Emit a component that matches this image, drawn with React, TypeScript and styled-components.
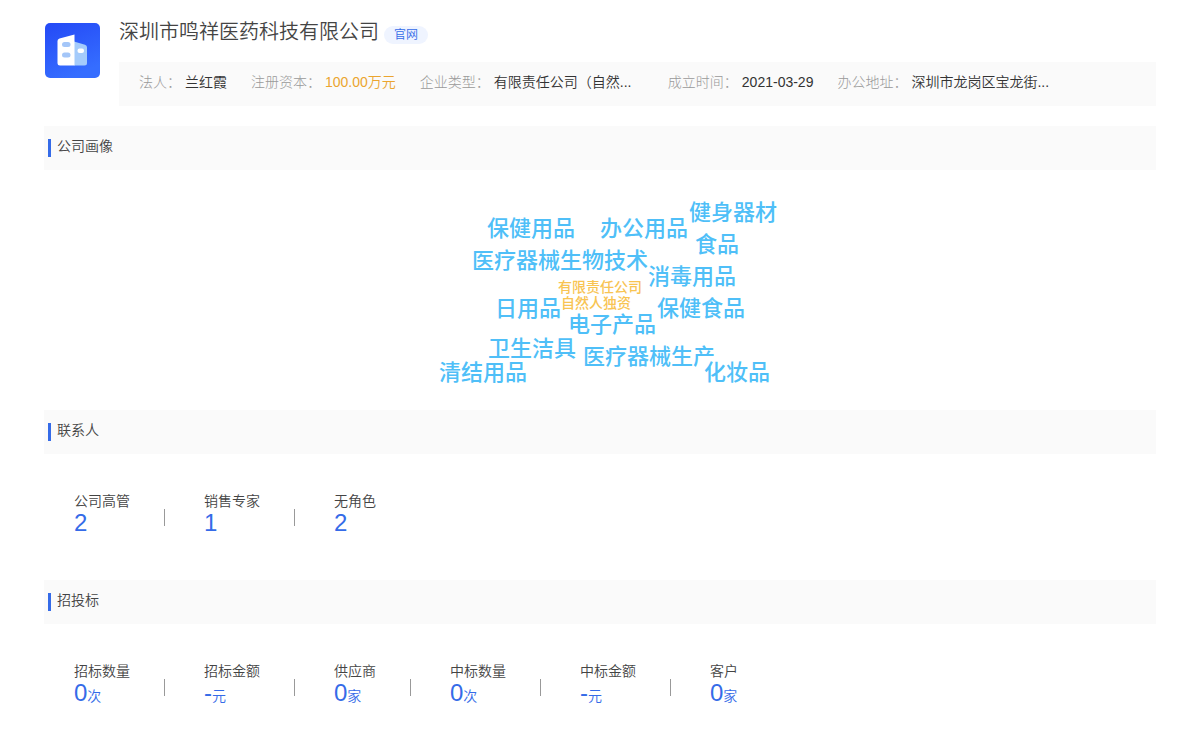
import React from "react";
import styled, { createGlobalStyle } from "styled-components";

const GlobalStyle = createGlobalStyle`
  * { box-sizing: border-box; }
  body {
    margin: 0;
    background: #fff;
    color: #444;
    font: 350 14px/20px "Liberation Sans", "Noto Sans CJK SC", sans-serif;
  }
  h1, h2, dl, dt, dd { margin: 0; font-weight: 350; }
`;

const Page = styled.main`
  padding: 20px 44px 0;
`;

const Header = styled.header`
  display: flex;
  gap: 18px;
  margin-bottom: 20px;
`;

const Logo = styled.svg`
  flex: none;
  width: 57px;
  height: 57px;
  margin-top: 2px;
`;

const HeaderBody = styled.div`
  flex: 1;
  min-width: 0;
`;

const TitleRow = styled.div`
  display: flex;
  align-items: center;
  gap: 5px;
  height: 24px;
  margin-bottom: 18px;
`;

const Title = styled.h1`
  font-size: 20px;
  line-height: 24px;
`;

const SiteLink = styled.a`
  align-self: flex-end;
  height: 18px;
  padding: 0 10px;
  border-radius: 9px;
  background: #eff4ff;
  color: #356be8;
  font-size: 12px;
  line-height: 18px;
  text-decoration: none;
`;

const Facts = styled.dl`
  display: flex;
  flex-wrap: wrap;
  column-gap: 24px;
  padding: 10px 20px 14px;
  background: #fafafa;
`;

const Fact = styled.div`
  display: flex;
  gap: 4px;
`;

const FactLabel = styled.dt`
  color: #999;
  font-weight: 300;
`;

const FactValue = styled.dd<{ $accent?: boolean; $wide?: boolean }>`
  width: ${(p) => (p.$wide ? "150px" : "auto")};
  white-space: nowrap;
  color: ${(p) => (p.$accent ? "#eba52f" : "#333")};
`;

const SectionHead = styled.div`
  display: flex;
  gap: 6px;
  height: 44px;
  padding: 10px 4px;
  background: #fafafa;
`;

const Marker = styled.span`
  width: 3px;
  height: 18px;
  margin-top: 3px;
  background: #356be8;
`;

const SectionTitle = styled.h2`
  font-size: 14px;
  line-height: 20px;
`;

const CloudArea = styled.div`
  display: flex;
  justify-content: center;
  height: 240px;
`;

const Word = styled.text<{ $minor?: boolean }>`
  font-size: ${(p) => (p.$minor ? "14px" : "22px")};
  font-weight: 500;
  fill: ${(p) => (p.$minor ? "#f8c453" : "#4fbff8")};
`;

const Stats = styled.dl`
  display: flex;
  flex-wrap: wrap;
  padding: 36px 30px;
  min-height: 126px;
`;

const Stat = styled.div`
  display: flex;
  flex-direction: column;

  & + & {
    margin-left: 34px;
    padding-left: 39px;
    border-left: 1px solid transparent;
    border-image: linear-gradient(transparent 19px, #999 19px, #999 36px, transparent 36px) 1;
  }
`;

const StatLabel = styled.dt`
  line-height: 22px;
`;

const StatValue = styled.dd`
  color: #356be8;
  font-size: 24px;
  line-height: 22px;
`;

const Unit = styled.span`
  font-size: 14px;
`;

const facts = [
  { label: "法人", value: "兰红霞" },
  { label: "注册资本", value: "100.00万元", accent: true },
  { label: "企业类型", value: "有限责任公司（自然...", wide: true },
  { label: "成立时间", value: "2021-03-29" },
  { label: "办公地址", value: "深圳市龙岗区宝龙街...", wide: true },
];

const words = [
  { text: "健身器材", x: 289, y: 50 },
  { text: "保健用品", x: 87, y: 66 },
  { text: "办公用品", x: 200, y: 66 },
  { text: "食品", x: 295, y: 82 },
  { text: "医疗器械生物技术", x: 72, y: 98 },
  { text: "消毒用品", x: 248, y: 114 },
  { text: "有限责任公司", x: 158, y: 122, minor: true },
  { text: "自然人独资", x: 161, y: 138, minor: true },
  { text: "日用品", x: 95, y: 146 },
  { text: "保健食品", x: 257, y: 146 },
  { text: "电子产品", x: 168, y: 162 },
  { text: "卫生洁具", x: 88, y: 186 },
  { text: "医疗器械生产", x: 183, y: 194 },
  { text: "清结用品", x: 39, y: 210 },
  { text: "化妆品", x: 304, y: 210 },
];

type StatItem = { label: string; value: string; unit?: string };

const contacts: StatItem[] = [
  { label: "公司高管", value: "2" },
  { label: "销售专家", value: "1" },
  { label: "无角色", value: "2" },
];

const bids: StatItem[] = [
  { label: "招标数量", value: "0", unit: "次" },
  { label: "招标金额", value: "-", unit: "元" },
  { label: "供应商", value: "0", unit: "家" },
  { label: "中标数量", value: "0", unit: "次" },
  { label: "中标金额", value: "-", unit: "元" },
  { label: "客户", value: "0", unit: "家" },
];

function SectionHeader({ title }: { title: string }) {
  return (
    <SectionHead>
      <Marker />
      <SectionTitle>{title}</SectionTitle>
    </SectionHead>
  );
}

function StatList({ items }: { items: StatItem[] }) {
  return (
    <Stats>
      {items.map((s) => (
        <Stat key={s.label}>
          <StatLabel>{s.label}</StatLabel>
          <StatValue>
            {s.value}
            {s.unit && <Unit>{s.unit}</Unit>}
          </StatValue>
        </Stat>
      ))}
    </Stats>
  );
}

export default function App() {
  return (
    <Page>
      <GlobalStyle />
      <Header>
        <Logo viewBox="0 0 57 57" aria-hidden="true">
          <defs>
            <linearGradient id="logoFill" x1="0" y1="0" x2="0.4" y2="1">
              <stop offset="0" stopColor="#2449f6" />
              <stop offset="1" stopColor="#356dff" />
            </linearGradient>
          </defs>
          <rect x="1" y="1" width="55" height="55" rx="5" fill="url(#logoFill)" />
          <path d="M30 19.500l11 3.200q2 .7 2 2.600V41q0 2.500-2.500 2.500H30z" fill="#a4cbfb" />
          <path d="M30.500 12.500v31H16q-2.500 0-2.500-2.500V19q0-2 2-2.600z" fill="#fff" />
          <rect x="18" y="20" width="8.500" height="5" rx="2.500" fill="#a4c6f8" />
          <rect x="18" y="30.500" width="8.500" height="5" rx="2.500" fill="#a4c6f8" />
          <rect x="33.500" y="26.500" width="6.500" height="4.500" rx="2" fill="#fff" />
        </Logo>
        <HeaderBody>
          <TitleRow>
            <Title>深圳市鸣祥医药科技有限公司</Title>
            <SiteLink href="#">官网</SiteLink>
          </TitleRow>
          <Facts>
            {facts.map((f) => (
              <Fact key={f.label}>
                <FactLabel>{f.label}：</FactLabel>
                <FactValue $accent={f.accent} $wide={f.wide}>
                  {f.value}
                </FactValue>
              </Fact>
            ))}
          </Facts>
        </HeaderBody>
      </Header>

      <section>
        <SectionHeader title="公司画像" />
        <CloudArea>
          <svg width="400" height="240" viewBox="0 0 400 240">
            {words.map((w) => (
              <Word key={w.text} x={w.x} y={w.y} $minor={w.minor}>
                {w.text}
              </Word>
            ))}
          </svg>
        </CloudArea>
      </section>

      <section>
        <SectionHeader title="联系人" />
        <StatList items={contacts} />
      </section>

      <section>
        <SectionHeader title="招投标" />
        <StatList items={bids} />
      </section>
    </Page>
  );
}
